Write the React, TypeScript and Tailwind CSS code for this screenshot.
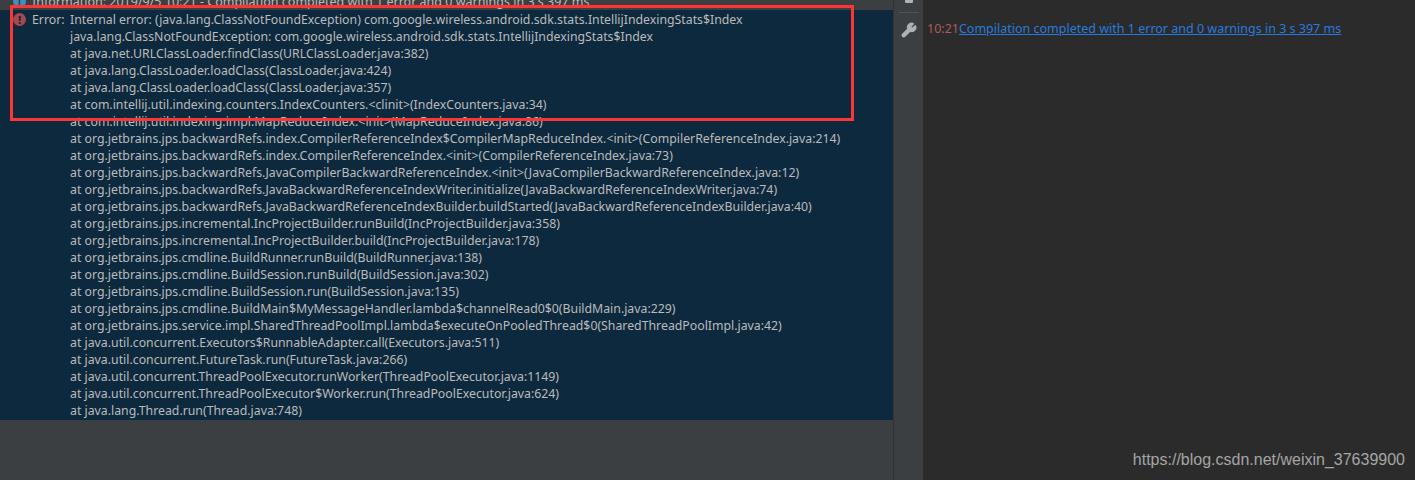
import { Wrench } from 'lucide-react';

const traceLines = [
  'java.lang.ClassNotFoundException: com.google.wireless.android.sdk.stats.IntellijIndexingStats$Index',
  'at java.net.URLClassLoader.findClass(URLClassLoader.java:382)',
  'at java.lang.ClassLoader.loadClass(ClassLoader.java:424)',
  'at java.lang.ClassLoader.loadClass(ClassLoader.java:357)',
  'at com.intellij.util.indexing.counters.IndexCounters.<clinit>(IndexCounters.java:34)',
  'at com.intellij.util.indexing.impl.MapReduceIndex.<init>(MapReduceIndex.java:86)',
  'at org.jetbrains.jps.backwardRefs.index.CompilerReferenceIndex$CompilerMapReduceIndex.<init>(CompilerReferenceIndex.java:214)',
  'at org.jetbrains.jps.backwardRefs.index.CompilerReferenceIndex.<init>(CompilerReferenceIndex.java:73)',
  'at org.jetbrains.jps.backwardRefs.JavaCompilerBackwardReferenceIndex.<init>(JavaCompilerBackwardReferenceIndex.java:12)',
  'at org.jetbrains.jps.backwardRefs.JavaBackwardReferenceIndexWriter.initialize(JavaBackwardReferenceIndexWriter.java:74)',
  'at org.jetbrains.jps.backwardRefs.JavaBackwardReferenceIndexBuilder.buildStarted(JavaBackwardReferenceIndexBuilder.java:40)',
  'at org.jetbrains.jps.incremental.IncProjectBuilder.runBuild(IncProjectBuilder.java:358)',
  'at org.jetbrains.jps.incremental.IncProjectBuilder.build(IncProjectBuilder.java:178)',
  'at org.jetbrains.jps.cmdline.BuildRunner.runBuild(BuildRunner.java:138)',
  'at org.jetbrains.jps.cmdline.BuildSession.runBuild(BuildSession.java:302)',
  'at org.jetbrains.jps.cmdline.BuildSession.run(BuildSession.java:135)',
  'at org.jetbrains.jps.cmdline.BuildMain$MyMessageHandler.lambda$channelRead0$0(BuildMain.java:229)',
  'at org.jetbrains.jps.service.impl.SharedThreadPoolImpl.lambda$executeOnPooledThread$0(SharedThreadPoolImpl.java:42)',
  'at java.util.concurrent.Executors$RunnableAdapter.call(Executors.java:511)',
  'at java.util.concurrent.FutureTask.run(FutureTask.java:266)',
  'at java.util.concurrent.ThreadPoolExecutor.runWorker(ThreadPoolExecutor.java:1149)',
  'at java.util.concurrent.ThreadPoolExecutor$Worker.run(ThreadPoolExecutor.java:624)',
  'at java.lang.Thread.run(Thread.java:748)',
];

export default function App() {
  return (
    <div className="relative flex h-[480px] w-[1415px] overflow-hidden bg-[#2b2b2b] font-['Noto_Sans',sans-serif] text-[12.3px] leading-[17px] text-[#bbbbbb]">
      <div className="flex w-[893px] flex-col bg-[#3c3f41]">
        <div className="flex h-[10px] items-end overflow-hidden pl-[13px]">
          <div className="flex h-[17px] items-center gap-[6px] whitespace-nowrap text-[12.5px]">
            <span className="flex h-[13px] w-[13px] items-center justify-center rounded-full bg-[#3d8fc4] text-[10px] font-bold text-[#3c3f41]">i</span>
            <span>Information: 2019/9/5 10:21 - Compilation completed with 1 error and 0 warnings in 3 s 397 ms</span>
          </div>
        </div>
        <div className="h-[410px] bg-[#0d293e] pt-[1px]">
          <div className="flex h-[17px] items-center whitespace-nowrap pl-[13px]">
            <span className="mr-[6px] flex h-[13px] w-[13px] items-center justify-center rounded-full bg-[#a8484c] text-[11px] font-extrabold text-[#0d293e]">!</span>
            <span className="w-[38px]">Error:</span>
            <span>Internal error: (java.lang.ClassNotFoundException) com.google.wireless.android.sdk.stats.IntellijIndexingStats$Index</span>
          </div>
          {traceLines.map((line) => (
            <div key={line} className="h-[17px] whitespace-nowrap pl-[70px]">
              {line}
            </div>
          ))}
        </div>
      </div>

      <div className="flex w-[30px] flex-col items-center border-l border-[#323232] bg-[#3c3f41]">
        <div className="h-[3px] w-[8px] rounded-b-[1px] bg-[#afb1b3]" />
        <div className="mt-[9px] h-px w-[20px] bg-[#515456]" />
        <Wrench size={16} fill="#afb1b3" strokeWidth={2.5} className="mt-[9px] text-[#afb1b3]" />
      </div>

      <div className="flex-1 pl-[4px] pt-[20px]">
        <div className="whitespace-nowrap text-[12.5px]">
          <span className="text-[#b05a5a]">10:21</span>
          <span className="text-[#287bde] underline">Compilation completed with 1 error and 0 warnings in 3 s 397 ms</span>
        </div>
      </div>

      <div className="absolute left-[10px] top-[5px] h-[116px] w-[844px] border-[3px] border-[#fc3535]" />
      <div className="absolute bottom-[10px] right-[10px] font-['Liberation_Sans',sans-serif] text-[16px] leading-[20px] text-[#a5a5a5]">
        https://blog.csdn.net/weixin_37639900
      </div>
    </div>
  );
}
